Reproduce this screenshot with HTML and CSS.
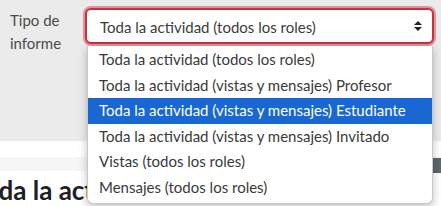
FILE: index.html
```html
<!DOCTYPE html>
<html lang="es">
<head>
<meta charset="utf-8">
<link rel="stylesheet" href="styles.css">
</head>
<body>
<div class="page">
  <div class="form-row">
    <label class="label">Tipo de<br>informe</label>
    <div class="select-wrap">
      <div class="select">
        <span class="select-text">Toda la actividad (todos los roles)</span>
        <svg class="arrows" width="8" height="10" viewBox="0 0 8 10"><path d="M4 0 L8 4 L0 4 Z M0 6 L8 6 L4 10 Z" fill="#222"/></svg>
      </div>
    </div>
  </div>
  <div class="band-white"></div>
  <div class="band-light"><span class="btn-edge"></span></div>
  <h2 class="heading">Toda la actividad (todos los roles)</h2>
</div>
<ul class="dropdown">
  <li>Toda la actividad (todos los roles)</li>
  <li>Toda la actividad (vistas y mensajes) Profesor</li>
  <li class="active">Toda la actividad (vistas y mensajes) Estudiante</li>
  <li>Toda la actividad (vistas y mensajes) Invitado</li>
  <li>Vistas (todos los roles)</li>
  <li>Mensajes (todos los roles)</li>
</ul>
</body>
</html>
```

FILE: styles.css
```css
html, body {
  margin: 0;
  padding: 0;
  background: #ffffff;
  overflow: hidden;
  font-family: Lato, "Open Sans", sans-serif;
}
.page {
  width: 441px;
  height: 206px;
  overflow: hidden;
}
.form-row {
  height: 141px;
  background: #ebebeb;
  display: flex;
  align-items: flex-start;
  box-sizing: border-box;
  padding-top: 6px;
}
.label {
  width: 73px;
  padding-left: 10px;
  padding-top: 3px;
  font-size: 15px;
  line-height: 23px;
  color: #4a4a4a;
}
.select-wrap {
  padding: 2px;
  border-radius: 8px;
  background: rgba(214, 77, 90, 0.55);
}
.select {
  border: 2px solid #c9313e;
  border-radius: 6px;
  background: #ffffff;
  display: flex;
  align-items: center;
  justify-content: space-between;
  padding: 0 10px 0 13px;
  box-sizing: border-box;
  width: 349px;
  height: 36px;
}
.select-text {
  font-size: 15px;
  color: #3c3c3c;
  padding-top: 1px;
}
.arrows {
  display: block;
}
.band-white {
  height: 16px;
  background: #ffffff;
}
.band-light {
  height: 14px;
  background: #f4f6f8;
  display: flex;
  justify-content: flex-end;
  align-items: flex-start;
}
.btn-edge {
  width: 8px;
  height: 15px;
  background: #5f666c;
  margin-top: 1px;
}
.heading {
  margin: 0;
  margin-left: -29px;
  margin-top: 4px;
  font-size: 26px;
  font-weight: 700;
  line-height: 30px;
  color: #1d2125;
  white-space: nowrap;
}
.dropdown {
  position: absolute;
  left: 87px;
  top: 46px;
  width: 346px;
  margin: 0;
  padding: 1px 0 3px;
  list-style: none;
  background: #ffffff;
  border: 1px solid #c8c8c8;
  border-top: none;
  border-radius: 0 0 6px 6px;
  box-shadow: 0 3px 8px rgba(0, 0, 0, 0.25);
  box-sizing: border-box;
}
.dropdown li {
  height: 25.5px;
  line-height: 25px;
  padding-left: 11px;
  font-size: 15px;
  color: #3a3a3a;
  white-space: nowrap;
}
.dropdown li.active {
  background: #1967d2;
  color: #ffffff;
}
```
